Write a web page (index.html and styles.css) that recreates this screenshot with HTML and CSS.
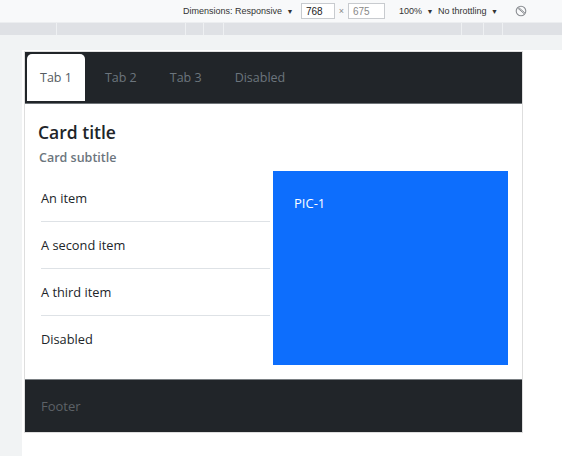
FILE: index.html
```html
<!DOCTYPE html>
<html>
<head>
<meta charset="utf-8">
<link rel="stylesheet" href="styles.css">
</head>
<body>
<div class="devbar">
  <span class="dim">Dimensions: Responsive <span class="caret">▼</span></span>
  <span class="box box-w">768</span>
  <span class="times">×</span>
  <span class="box box-h">675</span>
  <span class="zoomlvl">100% <span class="caret">▼</span></span>
  <span class="throttle">No throttling <span class="caret">▼</span></span>
  <svg class="rot" width="12" height="12" viewBox="0 0 12 12"><circle cx="6" cy="6" r="4.8" fill="none" stroke="#8a8d91" stroke-width="1.1"/><path d="M2.8 3.2 L9 8.6 M3.6 2.4 L9.8 7.8" stroke="#8a8d91" stroke-width="1"/></svg>
</div>
<div class="ruler">
  <span class="seg s1"></span><span class="seg s2"></span><span class="seg s3"></span><span class="seg s4"></span><span class="seg s5"></span><span class="seg s6"></span><span class="seg s7"></span><span class="seg s8"></span>
</div>
<div class="stage">
  <div class="viewport">
    <div class="card">
      <div class="card-header">
        <div class="tabs">
          <span class="tab active">Tab 1</span>
          <span class="tab">Tab 2</span>
          <span class="tab">Tab 3</span>
          <span class="tab">Disabled</span>
        </div>
      </div>
      <div class="card-body">
        <h5 class="card-title">Card title</h5>
        <h6 class="card-subtitle">Card subtitle</h6>
        <div class="row">
          <div class="col">
            <ul class="list">
              <li>An item</li>
              <li>A second item</li>
              <li>A third item</li>
              <li>Disabled</li>
            </ul>
          </div>
          <div class="pic">PIC-1</div>
        </div>
      </div>
      <div class="card-footer">Footer</div>
    </div>
  </div>
</div>
</body>
</html>
```
FILE: styles.css
```css
html, body { margin: 0; padding: 0; }
body {
  width: 562px;
  height: 456px;
  overflow: hidden;
  background: #ffffff;
  font-family: "Open Sans", "Noto Sans", sans-serif;
}
.devbar {
  height: 23px;
  background: #f8f9fa;
  display: flex;
  align-items: center;
  font-family: "Liberation Sans", Arial, sans-serif;
  font-size: 9px;
  color: #333;
  padding-left: 183px;
  box-sizing: border-box;
  border-bottom: 1px solid #eceef0;
}
.caret { font-size: 7px; margin-left: 2px; }
.dim { width: 118px; }
.box {
  height: 16px;
  box-sizing: border-box;
  border: 1px solid #c8cbcf;
  background: #fff;
  display: flex;
  align-items: center;
  padding-left: 4px;
  font-size: 10px;
}
.box-w { width: 34px; color: #222; }
.times { width: 13px; text-align: center; color: #888; }
.box-h { width: 37px; color: #888; }
.zoomlvl { margin-left: 14px; width: 39px; }
.throttle { width: 77px; }
.ruler {
  height: 12px;
  background: #dfe1e5;
  display: flex;
}
.seg { height: 100%; border-right: 1px solid #eef0f2; box-sizing: border-box; }
.s1 { width: 57px; }
.s2 { width: 129px; }
.s3 { width: 18px; }
.s4 { width: 20px; }
.s5 { width: 238px; }
.s6 { width: 22px; }
.s7 { width: 19px; }
.s8 { flex: 1; border-right: none; }
.stage {
  background: #f1f3f4;
  padding: 15px 0 0 22px;
  height: 421px;
  box-sizing: border-box;
}
.viewport {
  background: #ffffff;
  height: 100%;
  padding: 1px 0 0 2px;
  box-sizing: border-box;
}
.card {
  width: 499px;
  border: 1px solid #dedede;
  box-sizing: border-box;
  background: #fff;
}
.card-header {
  background: #212529;
  padding: 2px 2px 2px;
  border-bottom: 1px solid #6f7478;
}
.tabs { display: flex; gap: 7px; }
.tab {
  height: 47px;
  line-height: 47px;
  padding: 0 13px;
  font-size: 12.5px;
  color: #6c757d;
  border-radius: 5px 5px 0 0;
}
.tab.active { background: #fff; color: #555b61; }
.card-body { padding: 14px; }
.card-title {
  margin: 3px 0 0 -1px;
  font-size: 17.5px;
  line-height: 22px;
  font-weight: 600;
  color: #212529;
}
.card-subtitle {
  margin: 6px 0 0;
  font-size: 12.5px;
  line-height: 18px;
  font-weight: 600;
  color: #6c757d;
}
.row {
  margin-top: 4px;
  display: grid;
  grid-template-columns: 234px 1fr;
}
.col { padding: 0 3px 0 2px; }
.list { list-style: none; margin: 4px 0 0; padding: 0; }
.list li {
  height: 46px;
  line-height: 46px;
  font-size: 12.8px;
  color: #212529;
  border-bottom: 1px solid #dee2e6;
}
.list li:last-child { border-bottom: none; }
.pic {
  height: 194px;
  box-sizing: border-box;
  background: #0d6efd;
  color: #fff;
  font-size: 13px;
  line-height: 18px;
  padding: 23px 21px;
}
.card-footer {
  background: #212529;
  border-top: 1px solid #7a7f83;
  height: 53px;
  box-sizing: border-box;
  line-height: 52px;
  padding-left: 16px;
  font-size: 13px;
  color: #5d6267;
}
```
